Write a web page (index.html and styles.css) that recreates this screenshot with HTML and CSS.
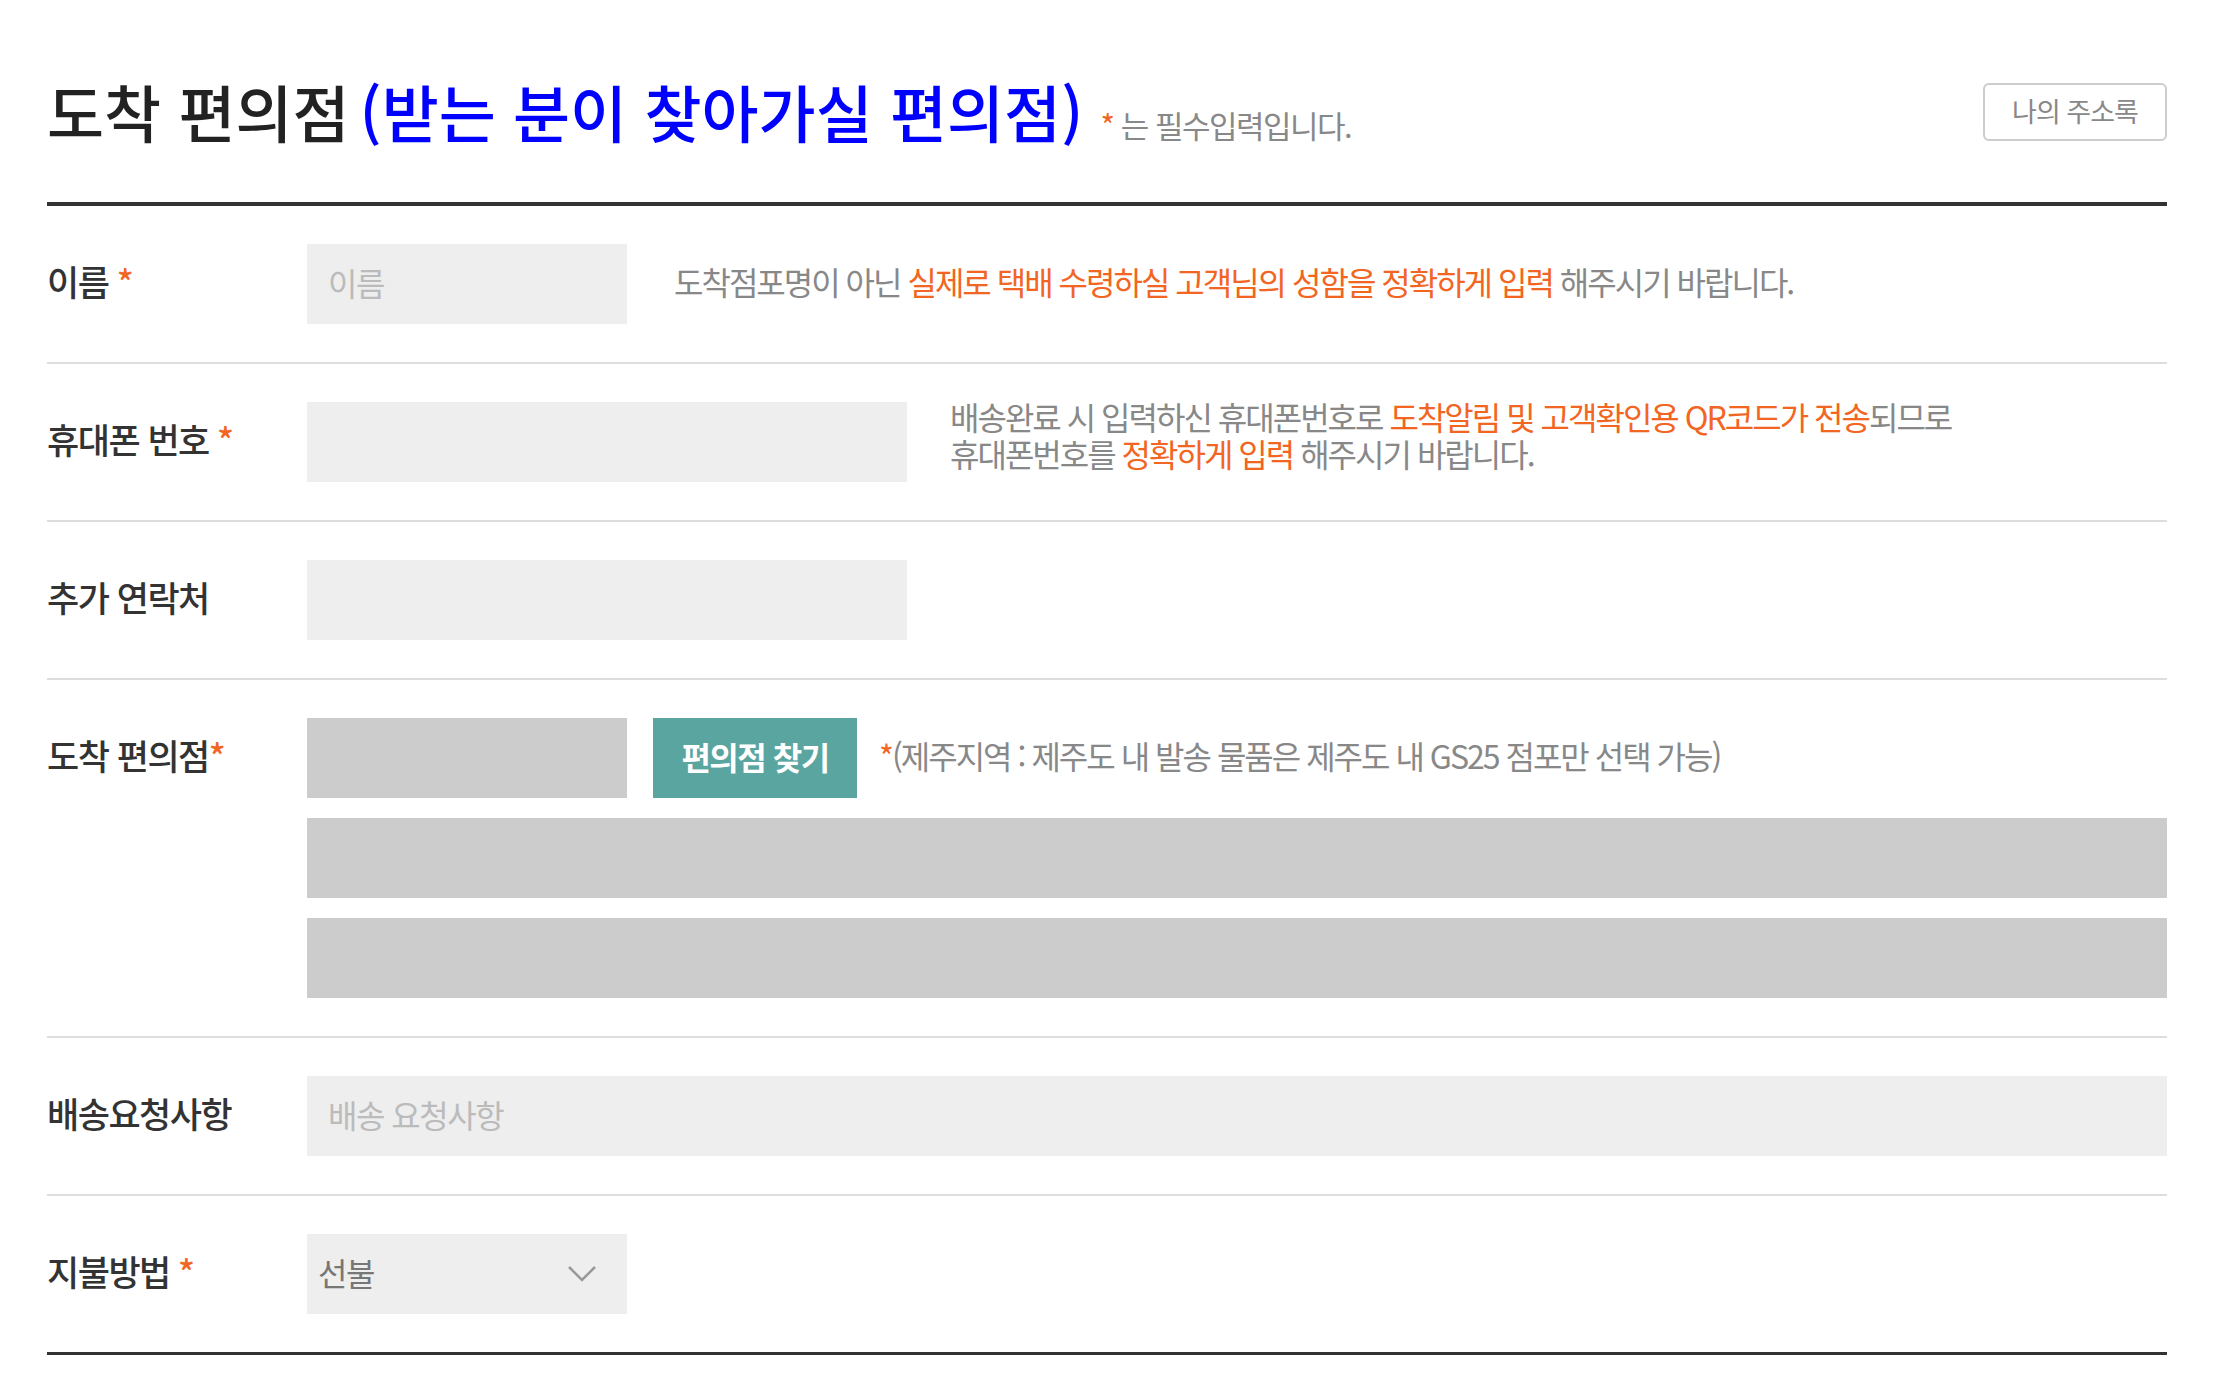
FILE: index.html
```html
<!DOCTYPE html>
<html lang="ko">
<head>
<meta charset="UTF-8">
<meta name="viewport" content="width=device-width, initial-scale=1.0">
<title>도착 편의점</title>
<link rel="stylesheet" href="styles.css">
</head>
<body>
<div class="container">
    <div class="head">
        <h2 class="title">도착 편의점<span class="blue">(받는 분이 찾아가실 편의점)</span> <span class="req-note"><em>*</em> 는 필수입력입니다.</span></h2>
        <button class="btn-addr">나의 주소록</button>
    </div>

    <div class="row">
        <div class="label">이름 <em>*</em></div>
        <div class="field">
            <input type="text" class="inp w-s" placeholder="이름">
            <p class="hint">도착점포명이 아닌 <span>실제로 택배 수령하실 고객님의 성함을 정확하게 입력</span> 해주시기 바랍니다.</p>
        </div>
    </div>

    <div class="row">
        <div class="label">휴대폰 번호 <em>*</em></div>
        <div class="field">
            <input type="text" class="inp w-m">
            <p class="hint two">배송완료 시 입력하신 휴대폰번호로 <span>도착알림 및 고객확인용 QR코드가 전송</span>되므로<br>휴대폰번호를 <span>정확하게 입력</span> 해주시기 바랍니다.</p>
        </div>
    </div>

    <div class="row">
        <div class="label">추가 연락처</div>
        <div class="field">
            <input type="text" class="inp w-m">
        </div>
    </div>

    <div class="row">
        <div class="label">도착 편의점<em>*</em></div>
        <div class="field stack">
            <div class="line">
                <div class="box w-s"></div>
                <button class="btn-find">편의점 찾기</button>
                <p class="hint small"><em>*</em>(제주지역 : 제주도 내 발송 물품은 제주도 내 GS25 점포만 선택 가능)</p>
            </div>
            <div class="box full"></div>
            <div class="box full"></div>
        </div>
    </div>

    <div class="row">
        <div class="label">배송요청사항</div>
        <div class="field">
            <input type="text" class="inp full" placeholder="배송 요청사항">
        </div>
    </div>

    <div class="row last">
        <div class="label">지불방법 <em>*</em></div>
        <div class="field">
            <div class="select w-s">
                <span>선불</span>
                <svg width="30" height="18" viewBox="0 0 30 18"><path d="M2 2 L15 15 L28 2" fill="none" stroke="#999" stroke-width="2.5"/></svg>
            </div>
        </div>
    </div>
</div>
</body>
</html>
```

FILE: styles.css
```css
/* 도착 편의점 입력 폼 */
body {
    margin: 0;
    padding: 0;
    background-color: #fff;
    font-family: "Noto Sans CJK KR", "Noto Sans", sans-serif;
    color: #333;
}
em {
    font-style: normal;
    color: #f26522;
}
.container {
    width: 2120px;
    margin: 0 auto;
}
.head {
    display: flex;
    justify-content: space-between;
    align-items: center;
    height: 124px;
    padding: 50px 0 28px;
    border-bottom: 4px solid #333;
}
.title {
    margin: 0 0 2px;
    font-size: 62px;
    line-height: 70px;
    font-weight: 500;
    color: #222;
    letter-spacing: 0;
}
.title .blue {
    margin-left: 10px;
    color: #0000ff;
}
.req-note {
    font-size: 31px;
    line-height: 1;
    font-weight: 400;
    color: #888;
    letter-spacing: -1.5px;
}
.btn-addr {
    width: 184px;
    height: 58px;
    padding-bottom: 4px;
    border: 2px solid #ccc;
    border-radius: 6px;
    background-color: #fff;
    color: #888;
    font-family: inherit;
    font-size: 27px;
    letter-spacing: -1px;
    cursor: pointer;
}
.row {
    display: flex;
    padding: 38px 0;
    border-bottom: 2px solid #ddd;
}
.row.last {
    border-bottom: 3px solid #333;
}
.label {
    width: 260px;
    flex-shrink: 0;
    line-height: 74px;
    font-size: 35px;
    font-weight: 500;
    color: #333;
    letter-spacing: -1.5px;
}
.field {
    flex: 1;
    display: flex;
    align-items: center;
}
.field.stack {
    flex-direction: column;
    align-items: stretch;
}
.line {
    display: flex;
    align-items: center;
}
.inp, .box, .select {
    box-sizing: border-box;
    height: 80px;
    border: none;
    background-color: #eee;
}
.inp {
    padding: 0 21px 5px;
    font-family: inherit;
    font-size: 32px;
    color: #555;
    letter-spacing: -1.5px;
    outline: none;
}
.inp::placeholder {
    color: #bbb;
}
.w-s {
    width: 320px;
}
.w-m {
    width: 600px;
}
.full {
    width: 100%;
}
.box {
    background-color: #ccc;
}
.stack .box.full {
    margin-top: 20px;
}
.hint {
    margin: 0 0 6px 47px;
    font-size: 32px;
    color: #888;
    letter-spacing: -2px;
}
.hint span {
    color: #f26522;
}
.hint.two {
    align-self: flex-start;
    margin: -4px 0 0 43px;
    line-height: 37px;
}
.hint.small {
    margin-left: 22px;
}
.btn-find {
    width: 204px;
    height: 80px;
    margin-left: 26px;
    padding-bottom: 5px;
    border: none;
    background-color: #5ba5a0;
    color: #fff;
    font-family: inherit;
    font-size: 32px;
    font-weight: 700;
    letter-spacing: -1.5px;
    cursor: pointer;
}
.select {
    display: flex;
    align-items: center;
    justify-content: space-between;
    padding: 0 30px 4px 11px;
    font-size: 32px;
    color: #777;
    letter-spacing: -1.5px;
}
.select svg {
    margin-top: 4px;
}
```
